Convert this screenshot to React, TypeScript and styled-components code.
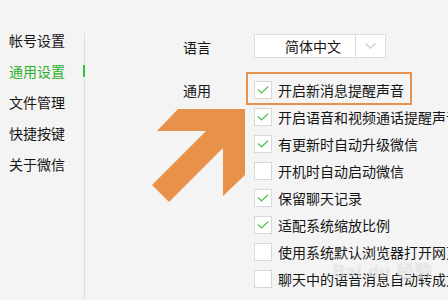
import React from "react";
import styled, { createGlobalStyle } from "styled-components";

const GlobalStyle = createGlobalStyle`
  html, body {
    margin: 0;
    padding: 0;
    background: #f4f4f4;
  }
  body {
    font-family: "Noto Sans CJK SC", "Noto Sans", sans-serif;
    color: #151515;
  }
`;

const Window = styled.div`
  position: relative;
  display: flex;
  width: 448px;
  height: 300px;
  overflow: hidden;
  background: #f4f4f4;
`;

const Nav = styled.nav`
  display: flex;
  flex-direction: column;
  flex: none;
  width: 84px;
  padding-top: 25px;
  box-sizing: border-box;
`;

const NavItem = styled.div<{ $active?: boolean }>`
  position: relative;
  height: 31px;
  line-height: 31px;
  padding-left: 9px;
  font-size: 14px;
  white-space: nowrap;
  color: ${(p) => (p.$active ? "#2bb02b" : "#151515")};

  ${(p) =>
    p.$active &&
    `
    &::after {
      content: "";
      position: absolute;
      right: -1px;
      top: 9px;
      width: 2px;
      height: 12px;
      background: #33c233;
    }
  `}
`;

const Divider = styled.div`
  flex: none;
  width: 1px;
  margin-top: 33px;
  background: #dedede;
`;

const Main = styled.main`
  display: flex;
  flex-direction: column;
  flex: none;
  padding: 34px 0 0 98px;
`;

const Row = styled.div`
  display: grid;
  grid-template-columns: 71px auto;
  align-items: start;
`;

const Label = styled.div<{ $top: number }>`
  font-size: 14px;
  line-height: 20px;
  white-space: nowrap;
  margin-top: ${(p) => p.$top}px;
`;

const Select = styled.div`
  display: flex;
  width: 132px;
  height: 24px;
  box-sizing: border-box;
  background: #fff;
  border: 1px solid #dcdcdc;
`;

const SelectValue = styled.div`
  flex: 1;
  padding-left: 30px;
  font-size: 14px;
  line-height: 22px;
  white-space: nowrap;
  border-right: 1px solid #dcdcdc;
`;

const SelectArrow = styled.div`
  display: flex;
  align-items: center;
  justify-content: center;
  width: 29px;
`;

const Options = styled.div`
  display: flex;
  flex-direction: column;
  margin-top: 18px;
`;

const Option = styled.div<{ $highlight?: boolean }>`
  position: relative;
  display: flex;
  align-items: center;
  gap: 6px;
  height: 27px;
  font-size: 14px;
  white-space: nowrap;

  ${(p) =>
    p.$highlight &&
    `
    &::before {
      content: "";
      position: absolute;
      left: -8px;
      top: -4px;
      width: 166px;
      height: 33px;
      box-sizing: border-box;
      border: 2px solid #e8914a;
    }
  `}
`;

const Box = styled.span`
  display: flex;
  align-items: center;
  justify-content: center;
  flex: none;
  width: 18px;
  height: 18px;
  box-sizing: border-box;
  background: #fff;
  border: 1px solid #d8d8d8;
`;

const Arrow = styled.svg`
  position: absolute;
  left: 0;
  top: 0;
  pointer-events: none;
`;

const Watermark = styled.div`
  position: absolute;
  left: 333px;
  top: 257px;
  font-family: "Liberation Sans", "Noto Sans CJK SC", sans-serif;
  font-size: 17px;
  font-weight: 700;
  letter-spacing: 1px;
  color: rgba(255, 255, 255, 0.55);
  text-shadow: 0 0 1px rgba(150, 150, 150, 0.45);
  pointer-events: none;
`;

const Check = () => (
  <svg width="12" height="8" viewBox="0 0 12 8">
    <path d="M1 3.5 L4.5 7 L11 0.8" fill="none" stroke="#4cc24c" strokeWidth="1.2" />
  </svg>
);

const Chevron = () => (
  <svg width="11" height="6" viewBox="0 0 11 6">
    <path d="M0.5 0.5 L5.5 5.2 L10.5 0.5" fill="none" stroke="#c9c9c9" strokeWidth="1.1" />
  </svg>
);

const navItems = ["帐号设置", "通用设置", "文件管理", "快捷按键", "关于微信"];

const options: { text: string; checked: boolean }[] = [
  { text: "开启新消息提醒声音", checked: true },
  { text: "开启语音和视频通话提醒声音", checked: true },
  { text: "有更新时自动升级微信", checked: true },
  { text: "开机时自动启动微信", checked: false },
  { text: "保留聊天记录", checked: true },
  { text: "适配系统缩放比例", checked: true },
  { text: "使用系统默认浏览器打开网页", checked: false },
  { text: "聊天中的语音消息自动转成文字", checked: false },
];

export default function App() {
  return (
    <Window>
      <GlobalStyle />
      <Nav>
        {navItems.map((it) => (
          <NavItem key={it} $active={it === "通用设置"}>
            {it}
          </NavItem>
        ))}
      </Nav>
      <Divider />
      <Main>
        <Row>
          <Label $top={3}>语言</Label>
          <Select>
            <SelectValue>简体中文</SelectValue>
            <SelectArrow>
              <Chevron />
            </SelectArrow>
          </Select>
        </Row>
        <Row>
          <Label $top={22}>通用</Label>
          <Options>
            {options.map((o, i) => (
              <Option key={o.text} $highlight={i === 0}>
                <Box>{o.checked && <Check />}</Box>
                {o.text}
              </Option>
            ))}
          </Options>
        </Row>
      </Main>
      <Arrow width="448" height="300" viewBox="0 0 448 300">
        <polygon
          points="178,109 245,109 245,175 223,196 223,148 169,202 152,185 206,131 157,131"
          fill="#e8914a"
        />
      </Arrow>
      <Watermark>Bai du 经验</Watermark>
    </Window>
  );
}
